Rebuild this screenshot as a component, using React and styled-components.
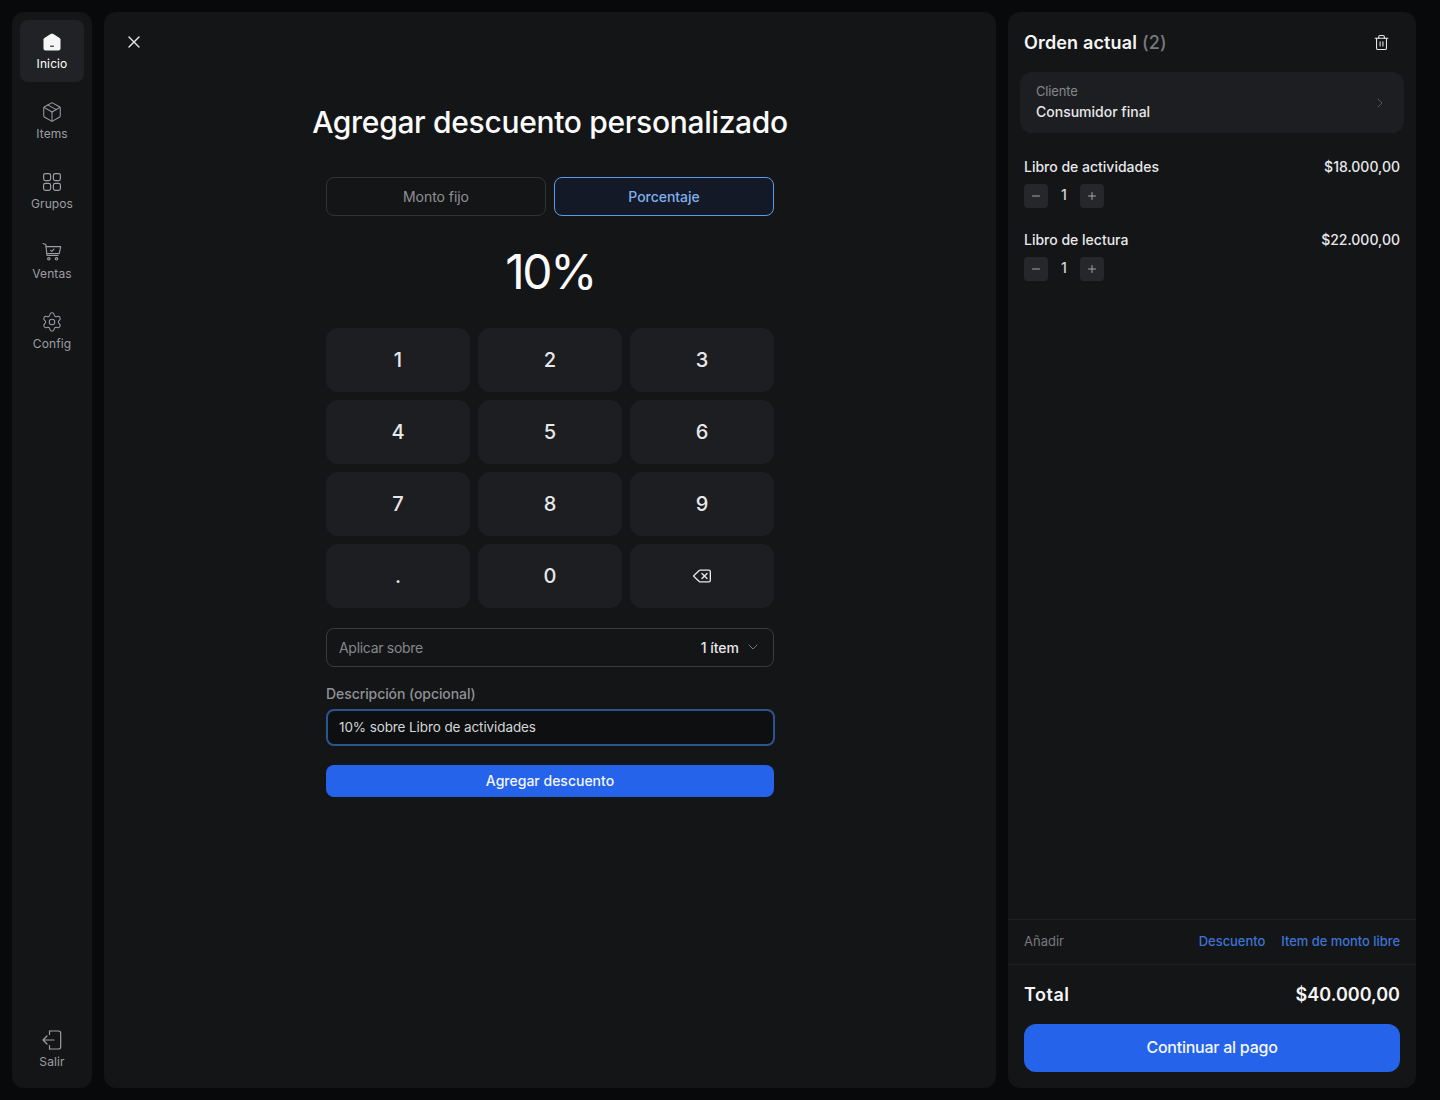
import React from 'react';
import styled, { createGlobalStyle } from 'styled-components';
import { X, Package, Settings, Trash2, ChevronRight, ChevronDown, Minus, Plus, Delete } from 'lucide-react';

const Global = createGlobalStyle`
  html, body { margin: 0; padding: 0; background: #08090b; }
  * { box-sizing: border-box; }
  body { font-family: Inter, "Noto Sans", sans-serif; color: #fff; }
`;
const Page = styled.div`
  width: 1440px; height: 1100px; padding: 12px 24px 12px 12px;
  display: flex; gap: 12px; background: #08090b;
`;
const Sidebar = styled.nav`
  width: 80px; flex: none; background: #141517; border-radius: 12px; padding: 8px;
  display: flex; flex-direction: column; gap: 8px;
`;
const NavItem = styled.div`
  height: 62px; border-radius: 8px; display: flex; flex-direction: column; align-items: center;
  justify-content: center; gap: 4px; font-size: 12px; line-height: 16px; letter-spacing: 0.1px;
  padding-top: 2px;
  color: ${p => p.$active ? '#fff' : '#9c9ea3'};
  background: ${p => p.$active ? '#212225' : 'transparent'};
`;
const Spacer = styled.div`flex: 1;`;
const Main = styled.main`
  width: 892px; flex: none; background: #141517; border-radius: 12px; position: relative;
  display: flex; flex-direction: column; align-items: center; padding-top: 89px;
`;
const CloseBtn = styled.button`
  position: absolute; left: 20px; top: 20px; width: 20px; height: 20px; padding: 0; border: 0;
  background: none; color: #e8e8ea; display: flex;
`;
const Title = styled.h1`
  margin: 0; font-size: 30px; line-height: 42px; font-weight: 500; color: #fbfbfb; letter-spacing: -0.32px;
`;
const Form = styled.div`width: 448px; display: flex; flex-direction: column;`;
const Tabs = styled.div`display: grid; grid-template-columns: 1fr 1fr; gap: 8px; margin-top: 34px;`;
const Tab = styled.div`
  height: 39px; border-radius: 8px; display: flex; align-items: center; justify-content: center;
  padding-bottom: 1px; font-size: 14px; letter-spacing: -0.05px; font-weight: ${p => p.$active ? 500 : 400};
  border: 1px solid ${p => p.$active ? '#5b9be8' : '#303236'};
  color: ${p => p.$active ? '#7fb0ec' : '#8f9196'};
  background: ${p => p.$active ? '#141927' : 'transparent'};
`;
const Amount = styled.div`
  height: 112px; display: flex; align-items: center; justify-content: center; padding-bottom: 2px;
  font-size: 48px; font-weight: 400; letter-spacing: -2.4px; color: #fbfbfb;
`;
const Keypad = styled.div`display: grid; grid-template-columns: repeat(3, 144px); grid-auto-rows: 64px; gap: 8px;`;
const Key = styled.button`
  border: 0; border-radius: 12px; background: #1d1e21; color: #e8e8ea; font: 500 20px Inter, sans-serif;
  display: flex; align-items: center; justify-content: center; padding: 0;
`;
const SelectRow = styled.div`
  margin-top: 20px; height: 39px; border: 1px solid #393b3f; border-radius: 8px;
  display: flex; align-items: center; padding: 0 12px 1px; font-size: 14px; letter-spacing: -0.3px; color: #85878c;
`;
const SelectValue = styled.span`margin-left: auto; color: #e8e8ea; font-weight: 500; margin-right: 6px; letter-spacing: 0;`;
const Chevron = styled.span`display: flex; color: #85878c;`;
const Label = styled.label`margin-top: 18px; font-size: 14px; line-height: 18px; font-weight: 500; letter-spacing: -0.08px; color: #8f9196;`;
const Input = styled.div`
  margin-top: 6px; height: 37px; border-radius: 8px; border: 2px solid #2a5590; background: #0e0f11;
  display: flex; align-items: center; padding: 0 11px 1px 11.5px; font-size: 13.5px; letter-spacing: -0.1px; color: #d4d5d8;
  margin-left: -0.5px; margin-right: -0.5px;
`;
const Submit = styled.button`
  margin-top: 19px; height: 32px; border: 0; border-radius: 8px; background: #2563eb; color: #f4f7fe;
  padding: 0 0 2px; font: 500 14px Inter, sans-serif;
`;
const Order = styled.aside`
  width: 408px; flex: none; background: #141517; border-radius: 12px; display: flex; flex-direction: column;
`;
const OrderHead = styled.div`
  height: 60px; padding: 0 16px; display: flex; align-items: center; justify-content: space-between;
`;
const OrderTitle = styled.h2`
  margin: 0; font-size: 18px; font-weight: 600; letter-spacing: 0.16px; color: #f5f5f6;
  span { color: #77797e; font-weight: 500; }
`;
const IconBtn = styled.span`display: flex; color: #e8e8ea; margin-right: 10px;`;
const Client = styled.div`
  margin: 0 12px; height: 61px; border-radius: 12px; background: #1d1e21; padding: 0 16px 2px;
  display: flex; align-items: center; justify-content: space-between;
`;
const ClientLabel = styled.div`font-size: 13px; line-height: 20px; letter-spacing: -0.15px; color: #85878c;`;
const ClientName = styled.div`font-size: 14px; line-height: 20px; font-weight: 500; color: #e8e8ea; margin-top: 1px;`;
const ClientArrow = styled.span`display: flex; color: #55575b; margin-top: 2px;`;
const Lines = styled.div`flex: 1; padding: 24px 16px 0; display: flex; flex-direction: column; gap: 22px;`;
const Line = styled.div``;
const LineTop = styled.div`
  display: flex; justify-content: space-between; font-size: 14px; line-height: 20px; font-weight: 500; color: #e8e8ea;
`;
const Qty = styled.div`display: flex; align-items: center; margin-top: 7px;`;
const QtyBtn = styled.span`
  width: 24px; height: 24px; border-radius: 4px; background: #26272a; color: #a3a5a9;
  display: flex; align-items: center; justify-content: center;
`;
const QtyNum = styled.span`width: 32px; text-align: center; font-size: 14px; line-height: 22px; padding-bottom: 2px; font-weight: 500; color: #d4d5d8;`;
const AddRow = styled.div`
  height: 46px; padding: 0 16px 2px; display: flex; align-items: center; gap: 16px; font-size: 13px;
  border-top: 1px solid #1e1f22; border-bottom: 1px solid #1e1f22; color: #77797e;
`;
const AddLabel = styled.span`margin-right: auto;`;
const AddLink = styled.span`color: #3c73d3; font-weight: 500; letter-spacing: -0.05px;`;
const TotalRow = styled.div`
  height: 59px; padding: 0 16px; display: flex; align-items: center; justify-content: space-between;
  font-size: 18px; font-weight: 600; color: #f5f5f6;
`;
const TotalLabel = styled.span`letter-spacing: 0.5px;`;
const Pay = styled.button`
  margin: 0 16px 16px; height: 48px; border: 0; border-radius: 12px; background: #2563eb; color: #f4f7fe;
  padding: 0 0 2px; font: 500 16px Inter, sans-serif; letter-spacing: -0.25px;
`;

const HomeIcon = () => (
  <svg width="20" height="20" viewBox="0 0 20 20">
    <path fill="#f5f5f6" d="M1.5 7.5c0-.7.3-1.2.9-1.6L8.6 2c.8-.5 2-.5 2.8 0l6.2 3.9c.6.4.9.9.9 1.6V16.5c0 1.1-.9 2-2 2H3.500c-1.100 0-2-.9-2-2V7.500z" />
    <rect x="8" y="13.600" width="4" height="1.400" rx=".4" fill="#55575b" />
  </svg>
);
const GridIcon = () => (
  <svg width="20" height="20" viewBox="0 0 20 20" fill="none" stroke="currentColor" strokeWidth="1.200">
    <rect x="1.600" y="1.600" width="7" height="7" rx="1.800" />
    <rect x="11.400" y="1.600" width="7" height="7" rx="1.800" />
    <rect x="1.600" y="11.400" width="7" height="7" rx="1.800" />
    <rect x="11.400" y="11.400" width="7" height="7" rx="1.800" />
  </svg>
);
const CartIcon = () => (
  <svg width="20" height="20" viewBox="0 0 20 20" fill="none" stroke="currentColor" strokeWidth="1.100" strokeLinecap="round" strokeLinejoin="round">
    <path d="M1 1.500l2.800.9L5 13.500h11" />
    <path d="M4 4.600h14.700l-1.500 7H5" />
    <path d="M8.600 8.300l1.200 1.100 2.200-2.200" />
    <circle cx="6.800" cy="16.800" r="1.200" />
    <circle cx="14.500" cy="16.800" r="1.200" />
  </svg>
);
const LogoutIcon = () => (
  <svg width="20" height="20" viewBox="0 0 20 20" fill="none" stroke="currentColor" strokeWidth="1.200" strokeLinecap="round" strokeLinejoin="round">
    <path d="M7.500 1h9c1.200 0 2.200 1 2.200 2.200v13.600c0 1.200-1 2.200-2.200 2.200h-9" />
    <path d="M7.500 1v3.500M7.500 19v-3.500" />
    <path d="M1 10h11M5 6l-4 4 4 4" />
  </svg>
);

const nav = [
  ['Inicio', <HomeIcon />, true],
  ['Items', <Package size={22} strokeWidth={1.100} style={{ margin: '-1px' }} />],
  ['Grupos', <GridIcon />],
  ['Ventas', <CartIcon />],
  ['Config', <Settings size={22} strokeWidth={1.100} style={{ margin: '-1px' }} />],
];
const items = [['Libro de actividades', '$18.000,00'], ['Libro de lectura', '$22.000,00']];

export default function App() {
  return (
    <Page>
      <Global />
      <Sidebar>
        {nav.map(([label, icon, active]) => (
          <NavItem key={label} $active={active}>{icon}<span>{label}</span></NavItem>
        ))}
        <Spacer />
        <NavItem><LogoutIcon /><span>Salir</span></NavItem>
      </Sidebar>
      <Main>
        <CloseBtn><X size={20} strokeWidth={1.6} /></CloseBtn>
        <Title>Agregar descuento personalizado</Title>
        <Form>
          <Tabs>
            <Tab>Monto fijo</Tab>
            <Tab $active>Porcentaje</Tab>
          </Tabs>
          <Amount>10%</Amount>
          <Keypad>
            {['1','2','3','4','5','6','7','8','9','.','0'].map(k => <Key key={k}>{k}</Key>)}
            <Key><Delete size={20} strokeWidth={1.6} /></Key>
          </Keypad>
          <SelectRow>
            Aplicar sobre
            <SelectValue>1 ítem</SelectValue>
            <Chevron><ChevronDown size={16} strokeWidth={1.3} /></Chevron>
          </SelectRow>
          <Label>Descripción (opcional)</Label>
          <Input>10% sobre Libro de actividades</Input>
          <Submit>Agregar descuento</Submit>
        </Form>
      </Main>
      <Order>
        <OrderHead>
          <OrderTitle>Orden actual <span>(2)</span></OrderTitle>
          <IconBtn><Trash2 size={17} strokeWidth={1.5} /></IconBtn>
        </OrderHead>
        <Client>
          <div>
            <ClientLabel>Cliente</ClientLabel>
            <ClientName>Consumidor final</ClientName>
          </div>
          <ClientArrow><ChevronRight size={16} strokeWidth={1.5} /></ClientArrow>
        </Client>
        <Lines>
          {items.map(([name, price]) => (
            <Line key={name}>
              <LineTop><span>{name}</span><span>{price}</span></LineTop>
              <Qty>
                <QtyBtn><Minus size={12} strokeWidth={2} /></QtyBtn>
                <QtyNum>1</QtyNum>
                <QtyBtn><Plus size={12} strokeWidth={2} /></QtyBtn>
              </Qty>
            </Line>
          ))}
        </Lines>
        <AddRow>
          <AddLabel>Añadir</AddLabel>
          <AddLink>Descuento</AddLink>
          <AddLink>Item de monto libre</AddLink>
        </AddRow>
        <TotalRow><TotalLabel>Total</TotalLabel><span>$40.000,00</span></TotalRow>
        <Pay>Continuar al pago</Pay>
      </Order>
    </Page>
  );
}
